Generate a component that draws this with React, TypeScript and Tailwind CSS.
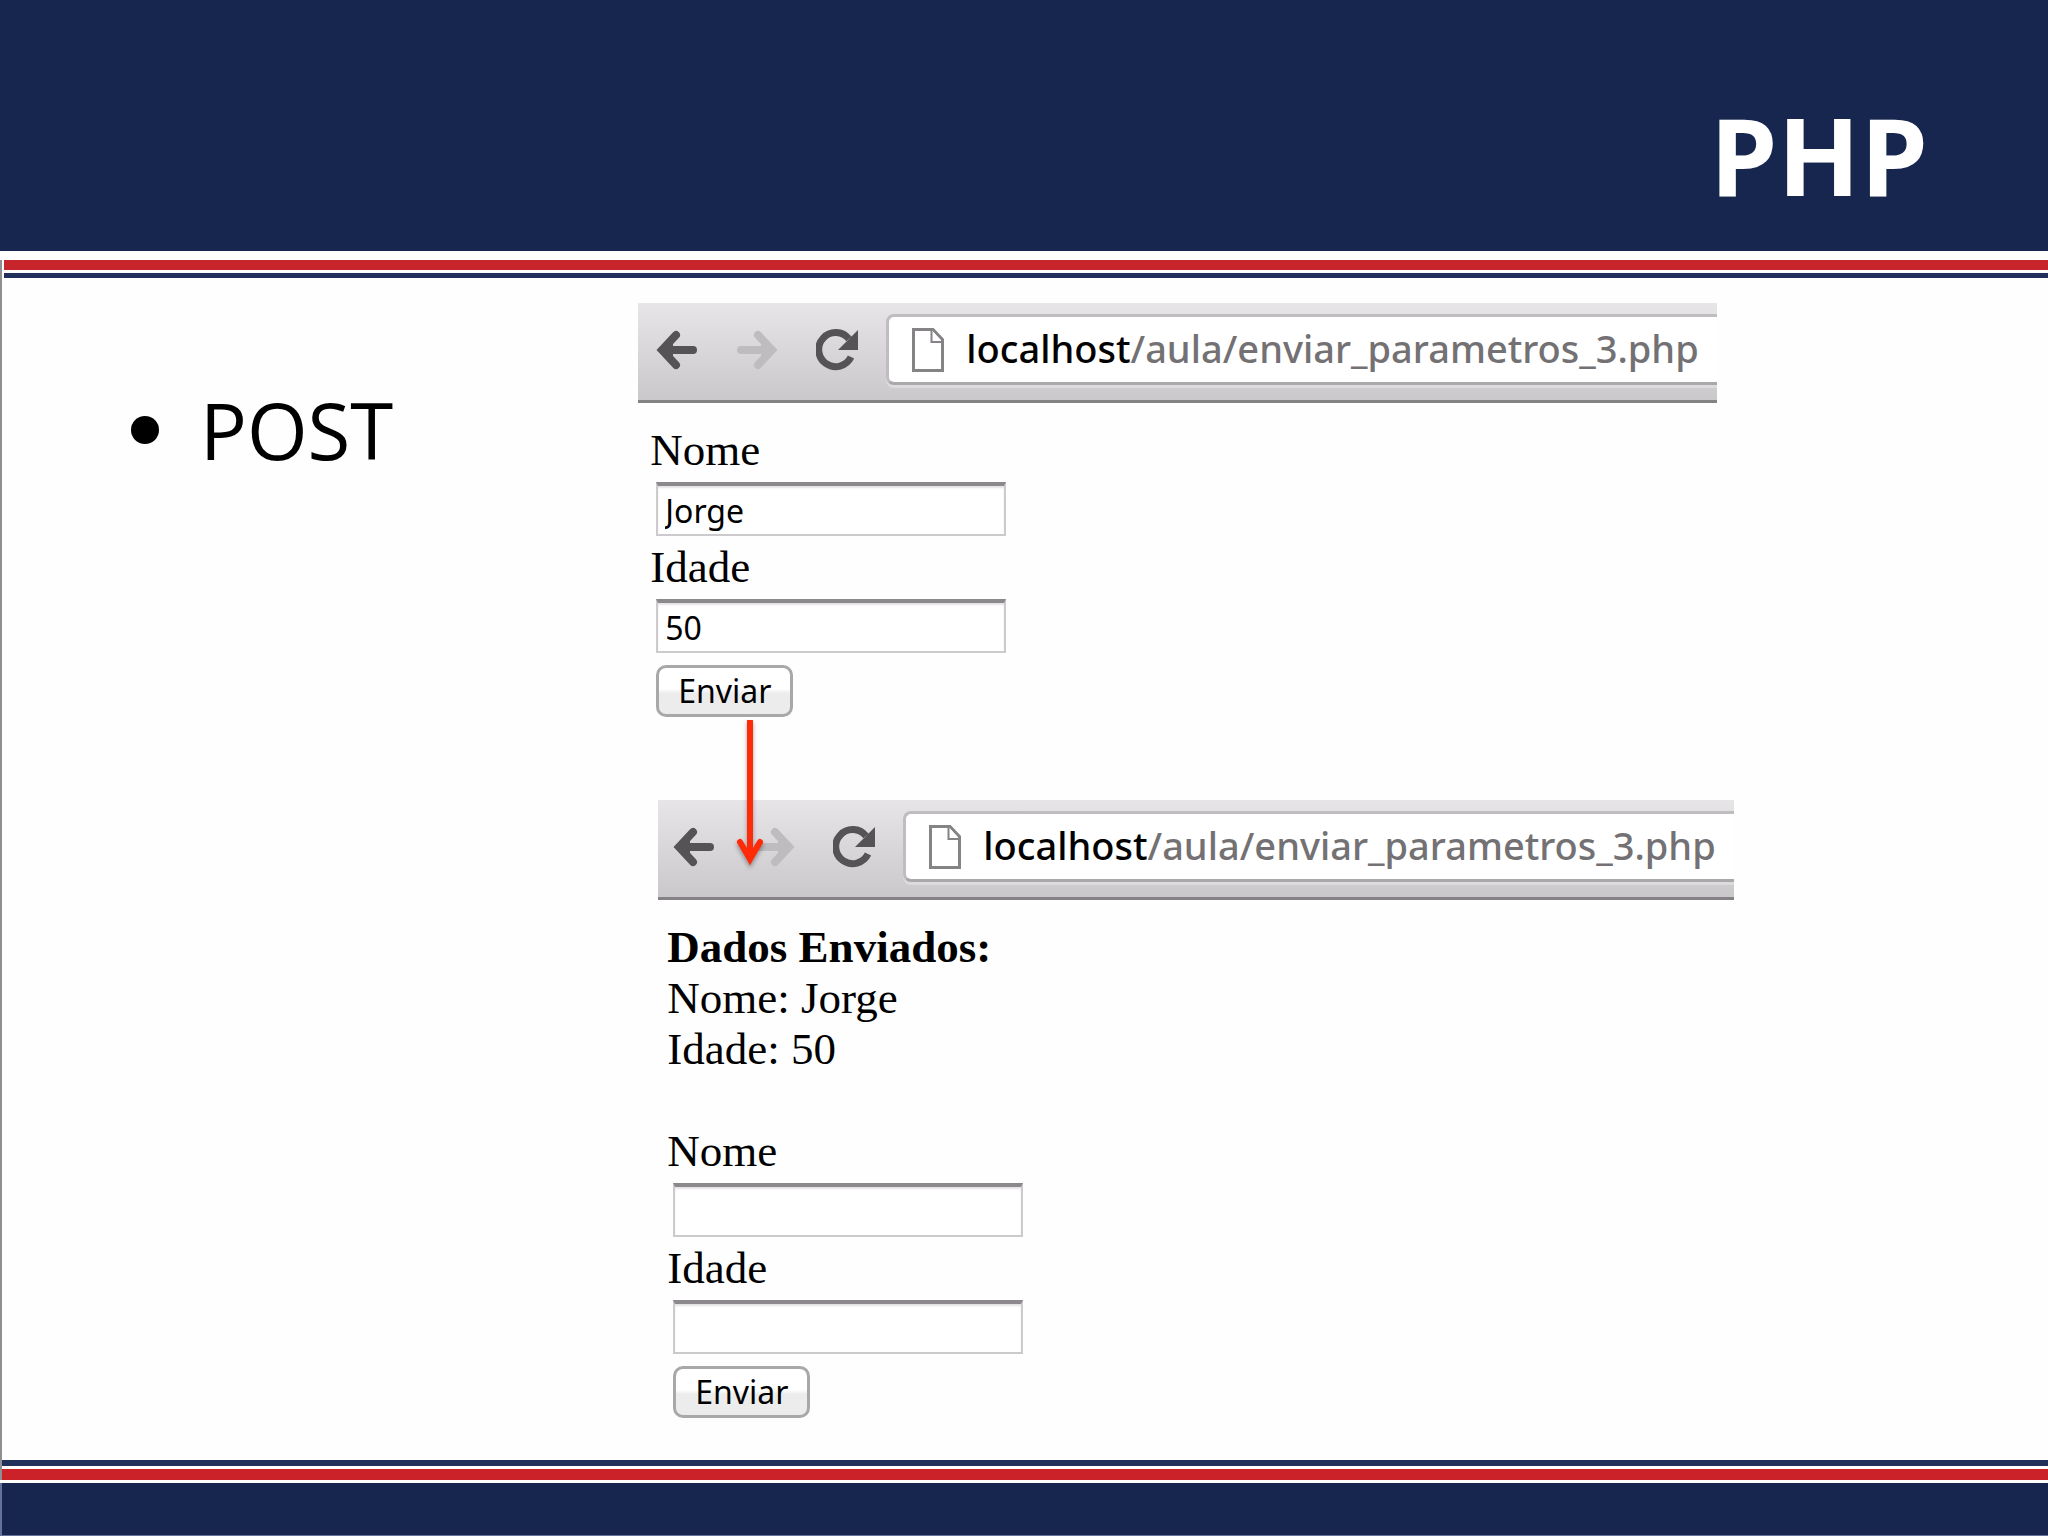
import clsx from "clsx";

function BackArrow({ className }: { className: string }) {
    return (
        <svg viewBox="0 0 42 40" className={className} fill="none" stroke="currentColor">
            <path d="M12 20H37" strokeWidth="8" strokeLinecap="round" />
            <path d="M20 5L6 20L20 35" strokeWidth="8" strokeLinecap="round" strokeLinejoin="miter" />
            <path d="M6 20L17 11V29Z" fill="currentColor" stroke="none" />
        </svg>
    );
}

function Reload() {
    return (
        <svg viewBox="0 0 42 42" className="h-[42px] w-[42px] text-[#555355]" fill="none">
            <path d="M33 10A17 17 0 1 0 35 28" stroke="currentColor" strokeWidth="7" />
            <path d="M42 1V21H22Z" fill="currentColor" />
        </svg>
    );
}

function PageIcon() {
    return (
        <svg viewBox="0 0 32 44" className="h-[44px] w-[32px] shrink-0" fill="#fff" stroke="#858385" strokeWidth="3">
            <path d="M1.5 1.5H21L30.5 11.5V42.5H1.5Z" />
            <path d="M19.5 2V14H30" strokeWidth="2" />
        </svg>
    );
}

function Toolbar({ cropped }: { cropped?: boolean }) {
    return (
        <div
            className={clsx(
                "flex h-[100px] items-center border-b-3 border-[#858285] bg-linear-to-b from-[#e7e5e7] to-[#cbc8cb] pb-1",
                cropped ? "pl-[15px]" : "pl-[18px]"
            )}
        >
            <button type="button" aria-label="Voltar">
                <BackArrow className="h-[40px] w-[42px] text-[#555355]" />
            </button>
            <button type="button" aria-label="Avançar" className="ml-[38px]">
                <BackArrow className="h-[40px] w-[42px] rotate-180 text-[#bebcbe]" />
            </button>
            <button type="button" aria-label="Recarregar" className="ml-[38px]">
                <Reload />
            </button>
            <div className="ml-7 flex h-[71px] min-w-0 flex-1 items-center gap-[22px] rounded-l-lg border-y-3 border-l-3 border-t-[#bfbdbf] border-b-[#aaa8aa] border-l-[#bfbdbf] bg-white pl-[23px] shadow-[0_3px_0_#dddbdd]">
                <PageIcon />
                <p className="pb-1 font-['Noto_Sans','Open_Sans',sans-serif] text-[38px] leading-[56px] font-medium whitespace-nowrap text-[#737173]">
                    <span className="text-black">localhost</span>/aula/enviar_parametros_3.php
                </p>
            </div>
        </div>
    );
}

function Field({ id, label, value }: { id: string; label: string; value: string }) {
    return (
        <div className="flex flex-col items-start">
            <label htmlFor={id} className="leading-[51px]">{label}</label>
            <input
                id={id}
                type="text"
                defaultValue={value}
                className="mx-1.5 my-1.5 h-[54px] w-[350px] border-2 border-t-4 border-[#cccacc] border-t-[#8c898c] bg-white pl-[7px] font-['Noto_Sans','Open_Sans',sans-serif] text-[32px] leading-[46px] shadow-[inset_0_2px_2px_#e4e2e4] outline-none"
            />
        </div>
    );
}

function Form({ name, nome, idade }: { name: string; nome: string; idade: string }) {
    return (
        <form onSubmit={(e) => e.preventDefault()}>
            <Field id={name + "-nome"} label="Nome" value={nome} />
            <Field id={name + "-idade"} label="Idade" value={idade} />
            <button
                type="submit"
                className="mx-1.5 mt-1.5 flex h-[52px] w-[137px] items-center justify-center rounded-[10px] border-3 border-[#a9a7a9] bg-linear-to-b from-white from-45% to-[#ececec] to-55% font-['Noto_Sans','Open_Sans',sans-serif] text-[32px] leading-[46px]"
            >
                Enviar
            </button>
        </form>
    );
}

export default function App() {
    return (
        <div className="flex min-h-screen flex-col bg-[#fefefe] text-black">
            <header className="h-[251px] bg-[#16264e] pt-[95px] pr-[120px] text-right">
                <h1 className="font-['Open_Sans','Noto_Sans',sans-serif] text-[108px] leading-[120px] font-bold text-white">PHP</h1>
            </header>
            <div className="h-[9px] bg-white" />

            <div className="flex flex-1 flex-col border-l-2 border-[#8f8f93]">
                <div className="ml-0.5 h-[10px] bg-[#c8242b]" />
                <div className="mt-[3px] ml-0.5 h-[5px] bg-[#20305a]" />

                <main className="flex flex-1 pt-[25px] pb-8">
                    <ul className="w-[31.1%] pt-[77px] pl-[129px]">
                        <li className="flex items-center gap-[41px] font-['Open_Sans','Noto_Sans',sans-serif] text-[78px] leading-[100px]">
                            <span className="h-7 w-7 rounded-full bg-black" />
                            POST
                        </li>
                    </ul>

                    <div className="relative min-w-0 flex-1 font-['Liberation_Serif',serif] text-[45px] leading-[51px]">
                        <section className="max-w-[1079px]">
                            <Toolbar />
                            <div className="px-3 pt-[22px]">
                                <Form name="envio" nome="Jorge" idade="50" />
                            </div>
                        </section>

                        <section className="mt-[83px] ml-5 max-w-[1076px]">
                            <Toolbar cropped />
                            <div className="px-[9px] pt-[22px]">
                                <h2 className="font-bold">Dados Enviados:</h2>
                                <p>Nome: Jorge</p>
                                <p className="mb-[51px]">Idade: 50</p>
                                <Form name="resposta" nome="" idade="" />
                            </div>
                        </section>

                        {/* arrow from the first form to its result */}
                        <svg
                            viewBox="0 0 40 150"
                            className="absolute top-[417px] left-[92px] h-[150px] w-[40px] drop-shadow-[0_3px_2px_rgba(0,0,0,0.35)]"
                            fill="none"
                            stroke="#ff2a08"
                            strokeWidth="6"
                        >
                            <path d="M20 0V136" />
                            <path d="M10 122L20 139L30 122" strokeLinecap="round" />
                            <path d="M20 145L13 130H27Z" fill="#ff2a08" stroke="none" />
                        </svg>
                    </div>
                </main>

                <div className="h-[6px] bg-[#20305a]" />
                <div className="mt-[3px] h-[11px] bg-[#cb2229]" />
            </div>
            <footer className="mt-[3px] h-[53px] border-b border-l-2 border-[#64719a] bg-[#16264e]" />
        </div>
    );
}
